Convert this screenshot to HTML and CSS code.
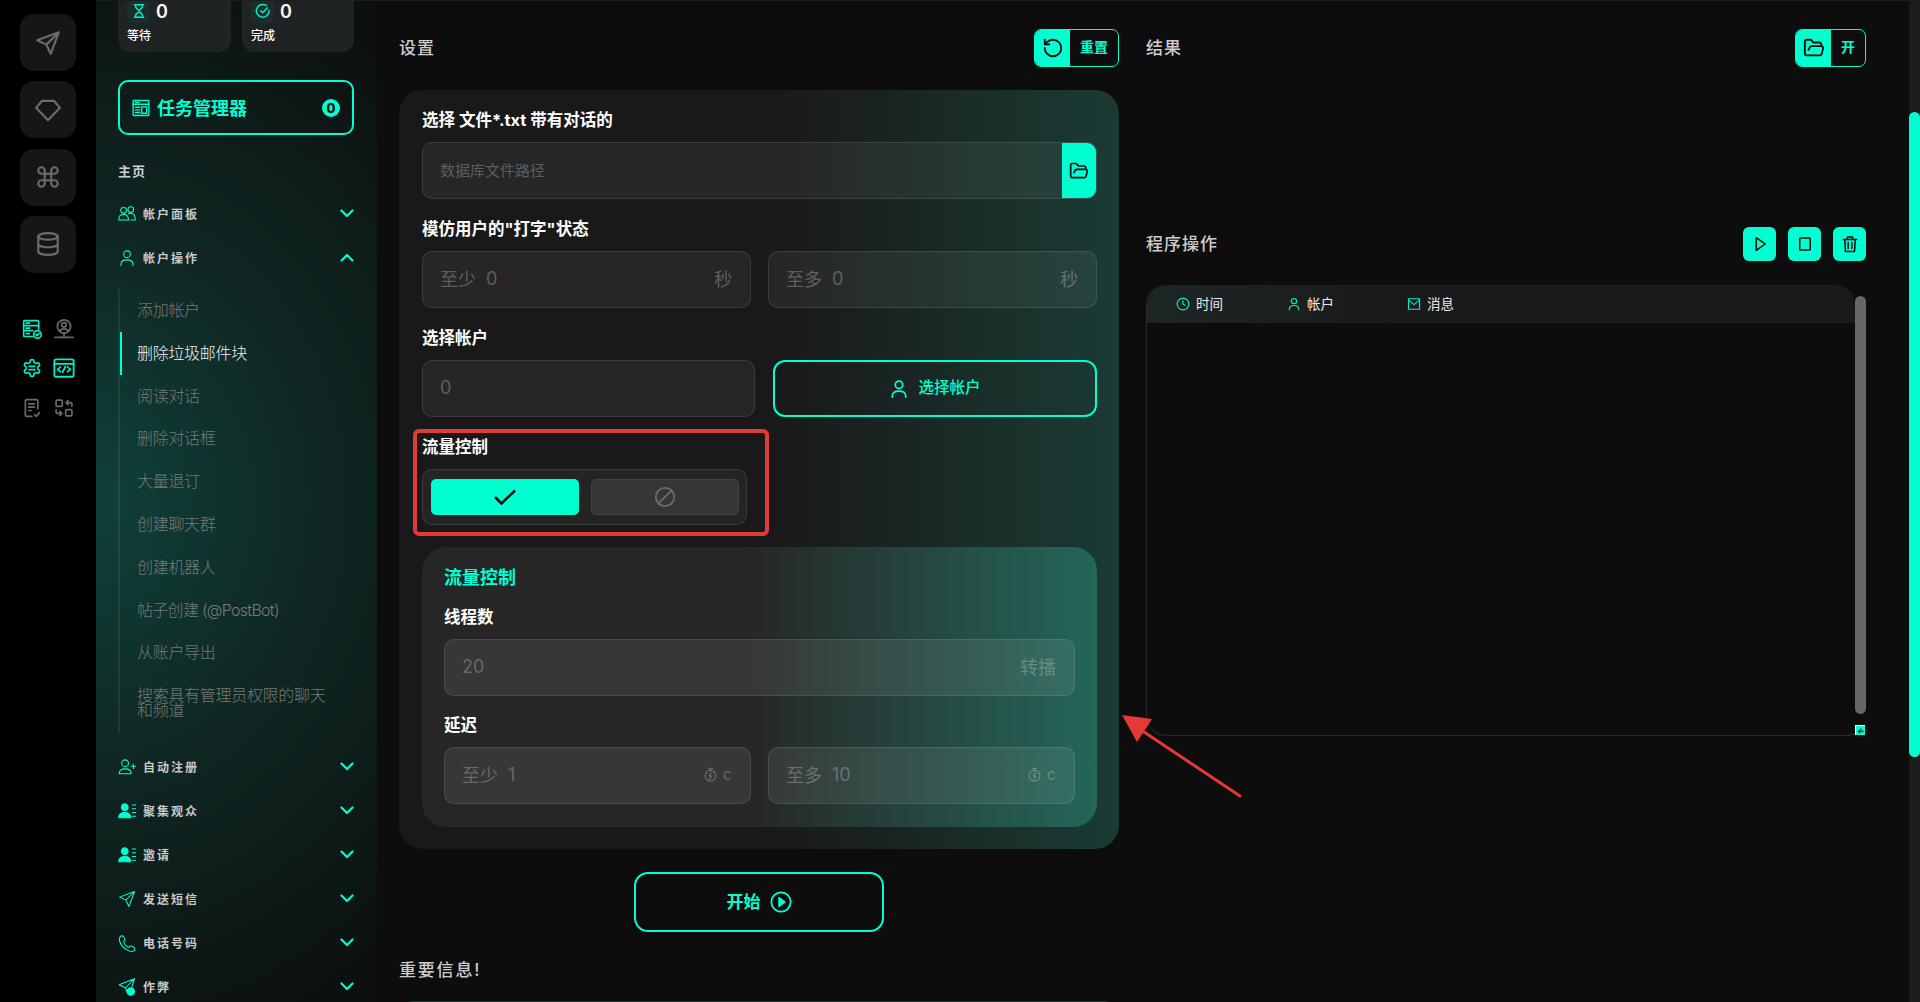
FILE: index.html
```html
<!DOCTYPE html>
<html lang="zh-CN">
  <head>
    <meta charset="UTF-8" />
    <title>任务管理器</title>
    <link rel="stylesheet" href="styles.css">
  </head>
  <body>
    <svg class="defs" aria-hidden="true">
      <symbol id="i-send" viewBox="0 0 24 24"><path d="M22 2 2 9.500l8.500 4 4 8.500zM22 2 10.500 13.500"/></symbol>
      <symbol id="i-diamond" viewBox="0 0 24 24"><path d="M6.500 3.500h11L23 10 12 21.500 1 10z"/></symbol>
      <symbol id="i-command" viewBox="0 0 24 24"><path d="M15 6v12a3 3 0 1 0 3-3H6a3 3 0 1 0 3 3V6a3 3 0 1 0-3 3h12a3 3 0 1 0-3-3"/></symbol>
      <symbol id="i-db" viewBox="0 0 24 24"><ellipse cx="12" cy="5" rx="9" ry="3"/><path d="M3 5v14c0 1.700 4 3 9 3s9-1.300 9-3V5M3 12c0 1.700 4 3 9 3s9-1.300 9-3"/></symbol>
      <symbol id="i-server" viewBox="0 0 24 24"><path d="M13 21H3a1 1 0 0 1-1-1V3a1 1 0 0 1 1-1h16a1 1 0 0 1 1 1v9M2 8h18M2 14h11M5 5h4M5 11h4M5 17.500h4"/><circle cx="18.500" cy="18.500" r="4.500"/><path d="m16.500 18.500 1.500 1.500 2.500-2.700"/></symbol>
      <symbol id="i-usernet" viewBox="0 0 24 24"><circle cx="12" cy="9" r="8"/><circle cx="12" cy="7" r="2.700"/><path d="M6.500 14.500c1-2 3-2.700 5.500-2.700s4.500.7 5.500 2.700M12 17v5M1 22h22"/></symbol>
      <symbol id="i-gear" viewBox="0 0 24 24"><path d="M12.220 2h-.44a2 2 0 0 0-2 2v.18a2 2 0 0 1-1 1.730l-.43.25a2 2 0 0 1-2 0l-.15-.08a2 2 0 0 0-2.730.73l-.22.38a2 2 0 0 0 .73 2.730l.15.1a2 2 0 0 1 1 1.720v.51a2 2 0 0 1-1 1.740l-.15.09a2 2 0 0 0-.73 2.730l.22.38a2 2 0 0 0 2.730.73l.15-.08a2 2 0 0 1 2 0l.43.25a2 2 0 0 1 1 1.730V20a2 2 0 0 0 2 2h.44a2 2 0 0 0 2-2v-.18a2 2 0 0 1 1-1.730l.43-.25a2 2 0 0 1 2 0l.15.08a2 2 0 0 0 2.730-.73l.22-.39a2 2 0 0 0-.73-2.730l-.15-.08a2 2 0 0 1-1-1.740v-.5a2 2 0 0 1 1-1.740l.15-.09a2 2 0 0 0 .73-2.730l-.22-.38a2 2 0 0 0-2.730-.73l-.15.08a2 2 0 0 1-2 0l-.43-.25a2 2 0 0 1-1-1.730V4a2 2 0 0 0-2-2z"/><path d="M8.500 10h7M8.500 14h7"/></symbol>
      <symbol id="i-code" viewBox="0 0 24 24"><rect x="1.500" y="2.500" width="21" height="19" rx="2"/><path d="M1.500 7.500h21M8 11l-3 2.500L8 16M16 11l3 2.500-3 2.500M13.500 10.500l-3 6"/></symbol>
      <symbol id="i-doc" viewBox="0 0 24 24"><path d="M19 13V4a2 2 0 0 0-2-2H6a2 2 0 0 0-2 2v16a2 2 0 0 0 2 2h6M8 7h7M8 11h7M8 15h3M15 20l2 2 4-4.500"/></symbol>
      <symbol id="i-swap" viewBox="0 0 24 24"><rect x="2.500" y="2.500" width="7.500" height="7.500" rx="1"/><rect x="14" y="14" width="7.500" height="7.500" rx="1"/><path d="M21.500 10V7a1.500 1.500 0 0 0-1.500-1.500h-5M17 3l-2.500 2.500L17 8M2.500 14v3A1.500 1.500 0 0 0 4 18.500h5M7 16l2.500 2.500L7 21"/></symbol>
      <symbol id="i-hourglass" viewBox="0 0 24 24"><path d="M5 2.500h14M5 21.500h14M7 2.500v4L17 17.500v4M17 2.500v4L7 17.500v4"/></symbol>
      <symbol id="i-checkc" viewBox="0 0 24 24"><path d="M21 11a9.500 9.500 0 1 1-4-7"/><path d="m8.500 11.500 3 3 7-7.500"/></symbol>
      <symbol id="i-task" viewBox="0 0 24 24"><rect x="1.500" y="2" width="21" height="20" rx="1"/><path d="M1.500 7h21M4.500 4.500h5M4.500 11h6M4.500 14.500h6M4.500 18h6M13 10.500h6.500v8.500H13z"/></symbol>
      <symbol id="i-users" viewBox="0 0 24 24"><circle cx="7.500" cy="7" r="3.800"/><circle cx="17" cy="6" r="3.800"/><path d="M1 20c0-5 2-7.500 6.500-7.500S14 15 14 20zM14 11.500c1-.3 2-.5 3-.5 4 0 6 3 6 9h-6"/></symbol>
      <symbol id="i-user" viewBox="0 0 24 24"><circle cx="12" cy="7" r="4.500"/><path d="M4 22v-1.500C4 17 7 14.500 12 14.500s8 2.500 8 6V22"/></symbol>
      <symbol id="i-useradd" viewBox="0 0 24 24"><circle cx="9.500" cy="7" r="4.500"/><path d="M1.500 21c0-4.500 3-6.500 8-6.500s8 2 8 6.500zM20.500 8v6M17.500 11h6"/></symbol>
      <symbol id="i-userlist" viewBox="0 0 24 24"><circle class="solid" cx="9" cy="7" r="4.500"/><path class="solid" d="M1 21c0-5 3-7 8-7s8 2 8 7z"/><path d="M19 4h4.500M19 9h4.500M19 14h4.500M19 19h4.500"/></symbol>
      <symbol id="i-phone" viewBox="0 0 24 24"><path d="M3 3.500c1-1.500 3.500-1.500 4.500 0L9 6.500c.5 1 .2 2-.5 2.700l-1 1c1 3.800 3.500 6.500 7 7.500l1-1c.8-.8 1.800-1 2.800-.5l3 1.500c1.500 1 1.500 3.500 0 4.500-2 1.500-5 1.500-8.800-.7C7 18.500 3.300 14 2 9 1.500 7 2 5 3 3.500z"/></symbol>
      <symbol id="i-sendplus" viewBox="0 0 24 24"><path d="M22 1 1.500 9l8.500 4 1.500 5M22 1 10 13M22 1l-3.500 11"/><circle class="solid" cx="17" cy="18" r="5"/></symbol>
      <symbol id="i-chev" viewBox="0 0 14 9"><path d="m1.500 1.500 5.500 5.500 5.500-5.500"/></symbol>
      <symbol id="i-reset" viewBox="0 0 24 24"><path d="M3 12a9 9 0 1 0 9-9 9.750 9.750 0 0 0-6.740 2.740L3 8"/><path d="M3 3v5h5"/></symbol>
      <symbol id="i-folder" viewBox="0 0 24 24"><path d="m6 14 1.500-2.900A2 2 0 0 1 9.240 10H20a2 2 0 0 1 1.940 2.500l-1.540 6a2 2 0 0 1-1.950 1.500H4a2 2 0 0 1-2-2V5a2 2 0 0 1 2-2h3.900a2 2 0 0 1 1.690.9l.81 1.200a2 2 0 0 0 1.670.9H18a2 2 0 0 1 2 2v2"/></symbol>
      <symbol id="i-check" viewBox="0 0 24 16"><path d="m2 8 6.500 6.500L22 1.500"/></symbol>
      <symbol id="i-ban" viewBox="0 0 24 24"><circle cx="12" cy="12" r="10"/><path d="M19 5 5 19"/></symbol>
      <symbol id="i-watch" viewBox="0 0 24 24"><circle cx="12" cy="14" r="8.500"/><path d="M8.500 2h7M12 2v3.500M13 9.500 10 14.500h4L11 19"/></symbol>
      <symbol id="i-playc" viewBox="0 0 24 24"><circle cx="12" cy="12" r="10.500"/><path class="solid" d="M10 7.500 16 12l-6 4.500z"/></symbol>
      <symbol id="i-play" viewBox="0 0 24 24"><path d="M7 3.500 19 12 7 20.500z"/></symbol>
      <symbol id="i-stop" viewBox="0 0 24 24"><rect x="5" y="4" width="14" height="16" rx="1"/></symbol>
      <symbol id="i-trash" viewBox="0 0 24 24"><path d="M3 6h18M8.500 6V2.500h7V6M5 6l1 16h12l1-16M9.500 10v8M14.500 10v8"/></symbol>
      <symbol id="i-clock" viewBox="0 0 24 24"><circle cx="12" cy="12" r="10"/><path d="M12 6.500V12l3.500 2"/></symbol>
      <symbol id="i-mail" viewBox="0 0 24 24"><rect x="2.500" y="3" width="19" height="18"/><path d="m2.500 5 9.500 8 9.500-8"/></symbol>
      <symbol id="i-resize" viewBox="0 0 10 10"><path d="M1.500 6 6 2v3h2.500v2H5L4 8.500z"/></symbol>
    </svg>

    <nav class="rail">
      <div class="rail-tiles">
        <div class="tile"><svg class="ic ic-26"><use href="#i-send"/></svg></div>
        <div class="tile"><svg class="ic ic-26"><use href="#i-diamond"/></svg></div>
        <div class="tile"><svg class="ic ic-26"><use href="#i-command"/></svg></div>
        <div class="tile"><svg class="ic ic-26"><use href="#i-db"/></svg></div>
      </div>
      <div class="rail-grid">
        <svg class="ic ic-20 teal"><use href="#i-server"/></svg>
        <svg class="ic ic-20"><use href="#i-usernet"/></svg>
        <svg class="ic ic-20 teal"><use href="#i-gear"/></svg>
        <svg class="ic ic-22 teal"><use href="#i-code"/></svg>
        <svg class="ic ic-20"><use href="#i-doc"/></svg>
        <svg class="ic ic-20"><use href="#i-swap"/></svg>
      </div>
    </nav>

    <aside class="sidebar">
      <div class="stats">
        <div class="stat">
          <div class="stat-top">
            <span class="stat-icon"><svg class="ic ic-16 teal"><use href="#i-hourglass"/></svg></span>
            <b>0</b>
          </div>
          <span class="stat-label">等待</span>
        </div>
        <div class="stat">
          <div class="stat-top">
            <span class="stat-icon"><svg class="ic ic-16 teal"><use href="#i-checkc"/></svg></span>
            <b>0</b>
          </div>
          <span class="stat-label">完成</span>
        </div>
      </div>

      <div class="task-btn">
        <svg class="ic ic-18"><use href="#i-task"/></svg>
        <span class="task-name">任务管理器</span>
        <span class="task-count">0</span>
      </div>

      <div class="nav-title">主页</div>
      <div class="nav-row"><svg class="ic ic-18"><use href="#i-users"/></svg><span>帐户面板</span><svg class="chev"><use href="#i-chev"/></svg></div>
      <div class="nav-row"><svg class="ic ic-18"><use href="#i-user"/></svg><span>帐户操作</span><svg class="chev up"><use href="#i-chev"/></svg></div>

      <ul class="sub-list">
        <li>添加帐户</li>
        <li class="active">删除垃圾邮件块</li>
        <li>阅读对话</li>
        <li>删除对话框</li>
        <li>大量退订</li>
        <li>创建聊天群</li>
        <li>创建机器人</li>
        <li class="narrow">帖子创建 (@PostBot)</li>
        <li>从账户导出</li>
        <li class="long">搜索具有管理员权限的聊天和频道</li>
      </ul>

      <div class="nav-row"><svg class="ic ic-18"><use href="#i-useradd"/></svg><span>自动注册</span><svg class="chev"><use href="#i-chev"/></svg></div>
      <div class="nav-row"><svg class="ic ic-18"><use href="#i-userlist"/></svg><span>聚集观众</span><svg class="chev"><use href="#i-chev"/></svg></div>
      <div class="nav-row"><svg class="ic ic-18"><use href="#i-userlist"/></svg><span>邀请</span><svg class="chev"><use href="#i-chev"/></svg></div>
      <div class="nav-row"><svg class="ic ic-18"><use href="#i-send"/></svg><span>发送短信</span><svg class="chev"><use href="#i-chev"/></svg></div>
      <div class="nav-row"><svg class="ic ic-18"><use href="#i-phone"/></svg><span>电话号码</span><svg class="chev"><use href="#i-chev"/></svg></div>
      <div class="nav-row"><svg class="ic ic-18"><use href="#i-sendplus"/></svg><span>作弊</span><svg class="chev"><use href="#i-chev"/></svg></div>
    </aside>

    <main class="main">
      <section class="col">
        <header class="col-head">
          <h2>设置</h2>
          <div class="split-btn">
            <span class="split-icon"><svg class="ic ic-22 dark"><use href="#i-reset"/></svg></span>
            <span class="split-text">重置</span>
          </div>
        </header>

        <div class="card">
          <div class="label">选择 文件*.txt 带有对话的</div>
          <div class="input has-btn">
            <span class="ph ph-small">数据库文件路径</span>
            <span class="input-btn"><svg class="ic ic-20 dark"><use href="#i-folder"/></svg></span>
          </div>

          <div class="label gap">模仿用户的"打字"状态</div>
          <div class="two">
            <div class="input"><span class="ph">至少</span><span class="ph">0</span><span class="suffix">秒</span></div>
            <div class="input"><span class="ph">至多</span><span class="ph">0</span><span class="suffix">秒</span></div>
          </div>

          <div class="label gap">选择帐户</div>
          <div class="two two-acc">
            <div class="input"><span class="ph">0</span></div>
            <div class="outline-btn"><svg class="ic ic-20"><use href="#i-user"/></svg><span>选择帐户</span></div>
          </div>

          <div class="label gap">流量控制</div>
          <div class="toggle">
            <span class="toggle-on"><svg class="ic-check dark"><use href="#i-check"/></svg></span>
            <span class="toggle-off"><svg class="ic ic-22"><use href="#i-ban"/></svg></span>
          </div>

          <div class="sub-card">
            <div class="label sub-title">流量控制</div>
            <div class="label sub-gap">线程数</div>
            <div class="input"><span class="ph">20</span><span class="suffix">转播</span></div>
            <div class="label sub-gap">延迟</div>
            <div class="two">
              <div class="input"><span class="ph">至少</span><span class="ph">1</span><span class="suffix unit"><svg class="ic ic-15"><use href="#i-watch"/></svg>c</span></div>
              <div class="input"><span class="ph">至多</span><span class="ph">10</span><span class="suffix unit"><svg class="ic ic-15"><use href="#i-watch"/></svg>c</span></div>
            </div>
          </div>
        </div>

        <div class="start-btn"><span>开始</span><svg class="ic ic-22"><use href="#i-playc"/></svg></div>

        <h2 class="info-title">重要信息!</h2>
        <div class="card card-next"></div>
      </section>

      <section class="col">
        <header class="col-head">
          <h2>结果</h2>
          <div class="split-btn split-open">
            <span class="split-icon"><svg class="ic ic-22 dark"><use href="#i-folder"/></svg></span>
            <span class="split-text">开</span>
          </div>
        </header>

        <header class="col-head ops-head">
          <h2>程序操作</h2>
          <div class="ops">
            <span class="op"><svg class="ic ic-18 dark"><use href="#i-play"/></svg></span>
            <span class="op"><svg class="ic ic-18 dark"><use href="#i-stop"/></svg></span>
            <span class="op"><svg class="ic ic-18 dark"><use href="#i-trash"/></svg></span>
          </div>
        </header>

        <div class="log">
          <div class="log-main">
            <div class="log-head">
              <span class="log-cell cell-time"><svg class="ic ic-14"><use href="#i-clock"/></svg>时间</span>
              <span class="log-cell cell-acc"><svg class="ic ic-14"><use href="#i-user"/></svg>帐户</span>
              <span class="log-cell"><svg class="ic ic-14"><use href="#i-mail"/></svg>消息</span>
            </div>
          </div>
          <div class="log-bar"><div class="log-thumb"></div></div>
          <span class="log-resize"><svg class="resize-mark"><use href="#i-resize"/></svg></span>
        </div>
      </section>
    </main>

    <div class="page-bar"><div class="page-thumb"></div></div>

    <!-- red marks drawn over the screen -->
    <svg class="marks" viewBox="0 0 1920 1002">
      <rect x="415" y="431" width="352" height="103" rx="4" fill="none" stroke="#e53935" stroke-width="4"/>
      <path d="M1240 796 1138 728" stroke="#e53935" stroke-width="3" stroke-linecap="round"/>
      <path d="M1122 715 1152 719 1137 742z" fill="#e53935"/>
    </svg>
  </body>
</html>
```

FILE: styles.css
```css
* {
  box-sizing: border-box;
}

html,
body {
  height: 100%;
}

body {
  margin: 0;
  display: flex;
  height: 1002px;
  overflow: hidden;
  position: relative;
  background: #0d0d0d;
  color: #fff;
  font-family: "Inter", "Noto Sans CJK SC", sans-serif;
}

.defs {
  position: absolute;
  width: 0;
  height: 0;
}

/* icons */
.ic {
  display: block;
  flex: none;
  fill: none;
  stroke: currentColor;
  stroke-width: 2;
  stroke-linecap: round;
  stroke-linejoin: round;
}

.ic .solid,
.solid {
  fill: currentColor;
}

.ic-14 { width: 14px; height: 14px; }
.ic-15 { width: 15px; height: 15px; }
.ic-16 { width: 16px; height: 16px; }
.ic-18 { width: 18px; height: 18px; }
.ic-20 { width: 20px; height: 20px; }
.ic-22 { width: 22px; height: 22px; }
.ic-26 { width: 26px; height: 26px; }

.teal { color: #00f0c4; }
.dark { color: #0b0b0b; }

/* far left rail */
.rail {
  width: 96px;
  flex: none;
  background: #000;
  padding: 14px 20px 0;
  color: #6b6b6b;
}

.rail-tiles {
  display: flex;
  flex-direction: column;
  gap: 10.300px;
}

.tile {
  height: 57px;
  border-radius: 14px;
  background: #161616;
  display: flex;
  align-items: center;
  justify-content: center;
}

.rail-grid {
  display: grid;
  grid-template-columns: 22px 22px;
  justify-content: space-between;
  grid-auto-rows: 20px;
  row-gap: 19.500px;
  margin-top: 46px;
  justify-items: center;
  align-items: center;
  padding: 0 1px;
}

/* sidebar */
.sidebar {
  width: 281px;
  flex: none;
  padding: 0 23px 0 22px;
  overflow: hidden;
  border-top: 1px solid #1d1d1d;
  background:
    radial-gradient(ellipse 470px 560px at 0% 50%, #10403a 0%, #0f2622 50%, rgba(12, 17, 16, 0) 100%),
    #0c1110;
}

.sidebar .ic {
  stroke-width: 1.400;
}

.stats {
  display: flex;
  gap: 11px;
  height: 52px;
  margin-top: -1px;
}

.stat {
  width: 113px;
  border-radius: 0 0 12px 12px;
  background: #1f2323;
  padding: 0 9px 8px;
  display: flex;
  flex-direction: column;
  justify-content: flex-end;
  overflow: hidden;
}

.stat:last-child {
  width: 112px;
}

.stat-top {
  display: flex;
  align-items: center;
  gap: 7px;
  height: 24px;
  margin-bottom: 5px;
  flex: none;
}

.stat-top b {
  font-size: 18px;
  font-weight: 600;
  margin-left: -1px;
}

.sidebar .stat-icon .ic {
  stroke-width: 2.200;
}

.stat-icon {
  width: 23px;
  height: 24px;
  border-radius: 5px;
  background: #1c2e2b;
  display: flex;
  align-items: center;
  justify-content: center;
}

.stat-label {
  font-size: 12px;
  font-weight: 500;
  line-height: 16px;
}

.task-btn {
  height: 55px;
  margin-top: 28px;
  padding: 0 12px;
  border: 2px solid #00ffd1;
  border-radius: 10px;
  display: flex;
  align-items: center;
  gap: 7px;
  color: #00ffd1;
}

.sidebar .task-btn .ic {
  stroke-width: 1.800;
}

.task-name {
  flex: 1;
  font-size: 18px;
  font-weight: 700;
  padding-bottom: 2px;
}

.task-count {
  width: 18px;
  height: 18px;
  border-radius: 50%;
  background: #00ffd1;
  color: #0b0b0b;
  font-size: 13px;
  font-weight: 800;
  line-height: 18px;
  text-align: center;
}

.nav-title {
  margin-top: 26px;
  height: 20px;
  line-height: 20px;
  font-size: 13px;
  font-weight: 700;
  letter-spacing: 1px;
  color: #cfcfcf;
}

.nav-row {
  height: 44px;
  display: flex;
  align-items: center;
  gap: 7px;
  color: #00ffd1;
}

.nav-title + .nav-row {
  margin-top: 11px;
}

.nav-row span {
  flex: 1;
  padding-bottom: 2px;
  font-size: 12px;
  font-weight: 700;
  letter-spacing: 2px;
  color: #c8c8c8;
}

.chev {
  width: 14px;
  height: 9px;
  margin-bottom: 2px;
  fill: none;
  stroke: #00ffd1;
  stroke-width: 2.200;
  stroke-linecap: round;
  stroke-linejoin: round;
}

.chev.up {
  transform: rotate(180deg);
}

.sub-list {
  list-style: none;
  margin: 9px 0 12px;
  padding: 0;
  height: 444px;
  border-left: 2px solid rgba(255, 255, 255, 0.07);
}

.sub-list li {
  height: 42.800px;
  line-height: 42.800px;
  padding-left: 17px;
  font-size: 16px;
  font-weight: 300;
  letter-spacing: -0.300px;
  color: #747a78;
}

.sub-list li.active {
  color: #f0f0f0;
  box-shadow: inset 2px 0 0 #00ffd1;
}

.sub-list li.narrow {
  letter-spacing: -0.700px;
}

.sub-list li.long {
  height: auto;
  line-height: 15px;
  padding: 14px 24px 0 17px;
}

/* main area */
.main {
  flex: 1;
  min-width: 0;
  padding: 28px 43px 0 22px;
  border-top: 1px solid #1d1d1d;
  display: grid;
  grid-template-columns: 720px 720px;
  column-gap: 27px;
  align-content: start;
  overflow: hidden;
}

.col {
  min-width: 0;
}

.col-head {
  height: 38px;
  display: flex;
  align-items: center;
  justify-content: space-between;
}

h2 {
  margin: 0;
  padding-bottom: 4px;
  font-size: 17px;
  font-weight: 500;
  letter-spacing: 1px;
  color: #cdcdcd;
}

.split-btn {
  width: 85px;
  height: 38px;
  border: 1px solid #00ffd1;
  border-radius: 7px;
  display: flex;
  overflow: hidden;
}

.split-icon {
  width: 35px;
  background: #00ffd1;
  display: flex;
  align-items: center;
  justify-content: center;
}

.split-text {
  flex: 1;
  text-align: center;
  line-height: 34px;
  font-size: 14px;
  font-weight: 700;
  color: #00ffd1;
}

.split-open {
  width: 71px;
}

.card {
  margin-top: 23px;
  padding: 20px 22px 22px 23px;
  border-radius: 24px;
  background: linear-gradient(90deg, #191919 52%, #1a3b34 100%);
}

.label {
  height: 22px;
  line-height: 21px;
  margin-bottom: 10px;
  font-size: 16.500px;
  font-weight: 700;
  color: #fff;
}

.label.gap {
  margin-top: 20px;
}

.input {
  height: 57px;
  padding: 0 18px 3px 17px;
  border: 1px solid rgba(255, 255, 255, 0.1);
  border-radius: 10px;
  background: rgba(255, 255, 255, 0.06);
  display: flex;
  align-items: center;
  gap: 10px;
  position: relative;
  overflow: hidden;
}

.ph {
  font-size: 18px;
  color: rgba(255, 255, 255, 0.27);
}

.ph-small {
  font-size: 15px;
}

.suffix {
  margin-left: auto;
  font-size: 18px;
  color: rgba(255, 255, 255, 0.27);
}

.unit {
  display: flex;
  align-items: center;
  gap: 5px;
  font-size: 16px;
}

.has-btn {
  padding: 0 0 0 17px;
}

.has-btn .ph {
  padding-bottom: 3px;
}

.input-btn {
  margin-left: auto;
  width: 34px;
  align-self: stretch;
  background: #00ffd1;
  display: flex;
  align-items: center;
  justify-content: center;
}

.two {
  display: grid;
  grid-template-columns: 1fr 1fr;
  column-gap: 17px;
}

.two-acc {
  grid-template-columns: 333px 324px;
  column-gap: 18px;
}

.outline-btn {
  border: 2px solid #00ffd1;
  border-radius: 12px;
  display: flex;
  align-items: center;
  justify-content: center;
  gap: 9px;
  font-size: 15.500px;
  font-weight: 500;
  color: #00ffd1;
}

.outline-btn span {
  padding-bottom: 6px;
}

.toggle {
  width: 325px;
  height: 56px;
  padding: 9px 8px;
  border: 1px solid rgba(255, 255, 255, 0.1);
  border-radius: 10px;
  background: rgba(255, 255, 255, 0.05);
  display: grid;
  grid-template-columns: 148px 148px;
  column-gap: 12px;
}

.toggle-on,
.toggle-off {
  border-radius: 5px;
  display: flex;
  align-items: center;
  justify-content: center;
}

.toggle-on {
  background: #00ffd1;
}

.ic-check {
  width: 24px;
  height: 16px;
  fill: none;
  stroke: currentColor;
  stroke-width: 2.600;
}

.toggle-off {
  background: #363636;
  border: 1px solid #434343;
  color: #6b6b6b;
}

.sub-card {
  margin-top: 22px;
  padding: 20px 22px 23px;
  border-radius: 24px;
  background: linear-gradient(90deg, #262626 48%, #24665a 100%);
}

.label.sub-gap {
  margin-top: 18px;
}

.sub-card .input + .label {
  margin-top: 19px;
}

.label.sub-title {
  color: #00ffd1;
  font-size: 18px;
  line-height: 22px;
  margin-bottom: 0;
}

.sub-card .input {
  background: rgba(255, 255, 255, 0.08);
}

.sub-card .ph,
.sub-card .suffix {
  color: rgba(255, 255, 255, 0.25);
}

.start-btn {
  width: 250px;
  height: 60px;
  margin: 23px auto 0;
  border: 2px solid #00ffd1;
  border-radius: 14px;
  display: flex;
  align-items: center;
  justify-content: center;
  gap: 9px;
  font-size: 17px;
  font-weight: 700;
  color: #00ffd1;
}

.start-btn span {
  padding-bottom: 4px;
}

.info-title {
  height: 22px;
  line-height: 22px;
  margin-top: 27px;
  padding: 0;
  letter-spacing: 1.800px;
}

.card-next {
  margin-top: 20px;
  height: 30px;
  padding: 0;
  border-top: 1px solid #1f3a34;
}

/* right column */
.ops-head {
  height: 34px;
  margin-top: 160px;
}

.ops {
  display: flex;
  gap: 12px;
}

.op {
  width: 33px;
  height: 34px;
  border-radius: 6px;
  background: #00ffd1;
  display: flex;
  align-items: center;
  justify-content: center;
}

.log {
  margin-top: 24px;
  height: 451px;
  border-left: 1px solid #2a2a2a;
  border-bottom: 1px solid #2a2a2a;
  border-radius: 20px;
  display: flex;
  position: relative;
}

.log-main {
  flex: 1;
}

.log-head {
  height: 38px;
  padding: 0 0 1px 29px;
  border-radius: 20px 20px 0 0;
  background: linear-gradient(90deg, #1c2725 0%, #1a1a1a 35%);
  display: flex;
  align-items: center;
}

.log-cell {
  display: flex;
  align-items: center;
  gap: 6px;
  font-size: 13.500px;
  line-height: 16px;
  color: #ececec;
}

.log-cell .ic {
  color: #00f0c4;
}

.cell-time {
  width: 111px;
}

.cell-acc {
  width: 120px;
}

.log-bar {
  width: 11px;
  padding: 11px 0 21px;
}

.log-thumb {
  height: 100%;
  border-radius: 6px;
  background: #666;
}

.log-resize {
  position: absolute;
  right: 1px;
  bottom: 0;
  width: 10px;
  height: 10px;
  background: #00ffd1;
  border-top: 1px solid #d9fff7;
  border-left: 1px solid #d9fff7;
}

.resize-mark {
  display: block;
  width: 9px;
  height: 9px;
  fill: #0f5a4c;
}

.page-bar {
  width: 11px;
  flex: none;
  padding-top: 112px;
  background: #1c1c1c;
}

.page-thumb {
  height: 645px;
  border-radius: 6px;
  background: #00ffd1;
}

.marks {
  position: absolute;
  top: 0;
  left: 0;
  width: 1920px;
  height: 1002px;
  pointer-events: none;
}
```
